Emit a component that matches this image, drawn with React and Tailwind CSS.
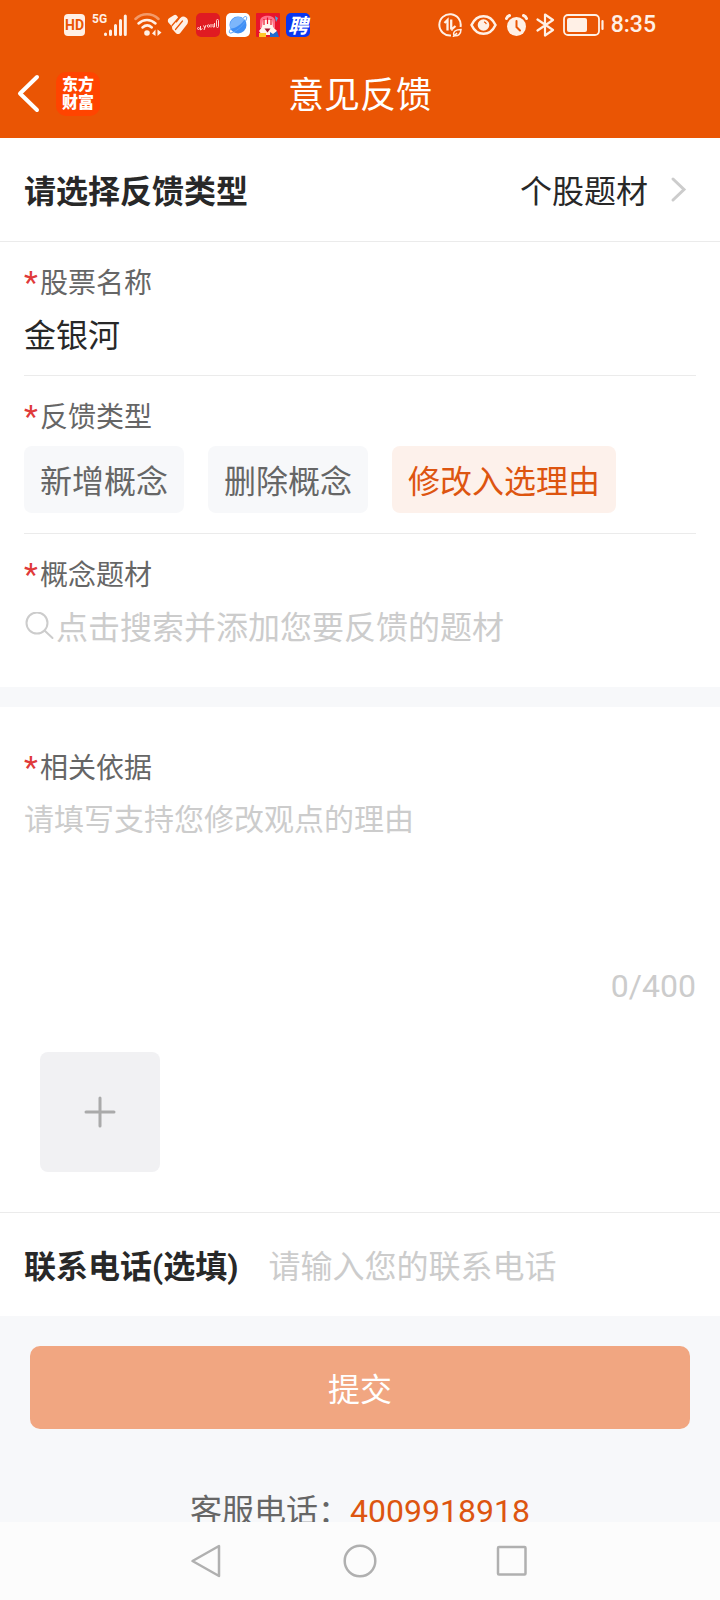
import React, { useState } from 'react';

const feedbackTypes = ['新增概念', '删除概念', '修改入选理由'];

const StatusBar = () => (
  <div className="flex h-[50px] items-center justify-between px-16 text-[#fff0e6]">
    <div className="flex items-center">
      <div className="flex h-[22px] w-[21px] items-center justify-center rounded bg-[#fff0e6] font-[Roboto] text-[14px] font-bold text-[#ea5504]">
        HD
      </div>
      <div className="-mr-1 ml-[7px] h-6 font-[Roboto] text-[12px] leading-3 font-bold">5G</div>
      <svg className="mr-[7px] h-6 w-6" viewBox="0 0 24 24" stroke="currentColor" strokeWidth="3" strokeLinecap="round">
        <path d="M2.500 21v.5M7.500 18v3.500M12.500 12.500v9M17.500 7.500v14M22.300 3v18.500" />
      </svg>
      <svg className="mr-[5px] h-6 w-7" viewBox="0 0 28 24" fill="none" stroke="currentColor" strokeWidth="2.500" strokeLinecap="round">
        <path d="M1.500 6C8-.3 18-.3 24.500 6" opacity=".45" />
        <path d="M4.500 10.500c5-4.800 12-4.800 17 0M8.500 14.500c3-2.600 6.500-2.600 9.300 0" />
        <circle cx="13" cy="20" r="2.800" fill="currentColor" stroke="none" />
        <path d="M18 20.500l3.500-4V23zM23.500 16.500V23l4-3.500z" fill="currentColor" stroke="none" />
      </svg>
      <svg className="mr-[7px] h-6 w-[22px]" viewBox="0 0 22 24" fill="none" stroke="currentColor" strokeLinecap="round" strokeLinejoin="round">
        <path d="M4 7.500L8 5M4 8l5 5.500" strokeWidth="6" />
        <path d="M9.500 13.500L15 6.500c1.500-1.500 4.500 0 3.500 3L11.500 18.500" strokeWidth="4.500" />
        <path d="M10.500 19L7 15" strokeWidth="4" />
        <path d="M15.500 8L8.500 16.500M11.500 5L5 12.500" stroke="#ea5504" strokeWidth="1.200" />
      </svg>
      <div className="flex gap-[6px]">
        <svg className="h-6 w-6" viewBox="0 0 24 24">
          <rect width="24" height="24" rx="5" fill="#e01b22" />
          <g fill="none" stroke="#ffd9d4" strokeWidth="1">
            <circle cx="2.500" cy="15.500" r="1" />
            <path d="M4.500 13v4l2-1.500M7.500 12.500l1.300 2.500L10 12M8.800 15L8 17" />
            <circle cx="12.500" cy="13" r="1.200" />
            <path d="M15 14.500v-3.500M17 11v3h1.500v-4" />
            <rect x="20.500" y="6.500" width="2" height="8" rx="1" />
          </g>
        </svg>
        <svg className="h-6 w-6" viewBox="0 0 24 24">
          <rect width="24" height="24" rx="5" fill="#fff" />
          <circle cx="12" cy="12" r="8.500" fill="#3f8ff5" />
          <path d="M4.500 15.500C9 16 16 11 18.500 6.500A8.500 8.500 0 0 0 4.500 15.500z" fill="#7db6fb" />
          <path d="M4.500 16c-1.500 2.500-1.500 3.700-.5 4 2 .5 8-3 12-7.300s5.500-8 4.300-9c-.7-.5-2 .1-3 1" fill="none" stroke="#5ba2f8" strokeWidth="1" />
        </svg>
        <svg className="h-6 w-6" viewBox="0 0 24 24">
          <rect width="24" height="24" rx="1" fill="#e8152b" />
          <path d="M4 15V8C4 1 19 1 19 8v7z" fill="#ff7088" />
          <path d="M3 18l3-4 1-7h9l1 7 4 4-3 4H6z" fill="#fff5ee" />
          <path d="M8 6v6M11.500 4.500V11M15 6v6" stroke="#e8152b" strokeWidth="1.200" />
          <path d="M8.500 15.500h6l-3 4z" fill="#a5142c" />
          <path d="M19 3l3 2-2 4z" fill="#44a8e8" />
          <path d="M3 20h7v4H3z" fill="#ffc928" />
          <path d="M14 19l3 2 4-3 2 6h-9z" fill="#1e6bd0" />
        </svg>
        <div className="flex h-6 w-6 items-center justify-center rounded-[5px] bg-[#0a36f0] font-['Noto_Sans_CJK_SC',sans-serif] text-[20px] leading-6 font-bold text-white italic">
          聘
        </div>
      </div>
    </div>
    <div className="flex items-center">
      <svg className="mr-2 h-6 w-6" viewBox="0 0 24 24" fill="none" stroke="currentColor" strokeWidth="2">
        <path d="M22.500 14A10.700 10.700 0 1 0 13 22.500" />
        <path d="M6.500 10L9.500 7v10.500M13.200 6.500v10M17.500 13l-4 3.500M13.200 16.500h1.500" strokeWidth="2.300" />
        <path d="M16 22.500c-1.500-4 2-6 7-6 0 4.500-3 7-7 6zM15 24l4-4" strokeWidth="1.500" />
      </svg>
      <svg className="mr-2 h-6 w-[27px]" viewBox="0 0 27 24" fill="none" stroke="currentColor" strokeWidth="2.500">
        <path d="M1.500 12C7 .3 20 .3 25.500 12 20 23.700 7 23.700 1.500 12z" />
        <circle cx="13.500" cy="12" r="5.800" fill="currentColor" stroke="none" />
        <path d="M14 8.800a3 3 0 0 1 2.300 2.300" stroke="#ea5504" strokeWidth="1.200" />
      </svg>
      <svg className="mr-2 h-6 w-[23px]" viewBox="0 0 23 24" fill="none">
        <circle cx="11.500" cy="13.500" r="9.500" fill="currentColor" />
        <path d="M1.500 5.500C2 4 3 3 4.500 2.500M18.500 2.500C20 3 21 4 21.500 5.500" stroke="currentColor" strokeWidth="3" strokeLinecap="round" />
        <path d="M11.500 8v6l3.500 3.500" stroke="#ea5504" strokeWidth="2" strokeLinecap="round" />
      </svg>
      <svg className="mr-2 h-6 w-[19px]" viewBox="0 0 19 24" fill="none" stroke="currentColor" strokeWidth="2.200" strokeLinejoin="round" strokeLinecap="round">
        <path d="M1.500 6.500L17 17l-8 5.500v-21L17 7 1.500 17.500" />
      </svg>
      <svg className="mr-[7px] h-6 w-[41px]" viewBox="0 0 41 24" fill="none">
        <rect x="1" y="2" width="35" height="20" rx="4" stroke="currentColor" strokeWidth="1.800" />
        <rect x="4" y="5" width="20" height="14" rx="2" fill="currentColor" />
        <path d="M39.500 8v8" stroke="currentColor" strokeWidth="2.200" strokeLinecap="round" />
      </svg>
      <span className="font-[Roboto] text-[23px] leading-6 font-medium">8:35</span>
    </div>
  </div>
);

const FieldLabel = ({ htmlFor, children }) => (
  <label htmlFor={htmlFor} className="flex h-10 items-center text-[28px] leading-10 text-[#666666]">
    <span className="w-4 self-start text-[32px] leading-9 text-[#e03a3a]">*</span>
    {children}
  </label>
);

const SystemNav = () => (
  <nav className="flex h-[78px] shrink-0 items-center justify-center gap-[116px] bg-[#fcfcfc] text-[#b0b0b0]">
    <button type="button" aria-label="返回">
      <svg className="h-9 w-9" viewBox="0 0 36 36" fill="none" stroke="currentColor" strokeWidth="2.500" strokeLinejoin="round">
        <path d="M29 3v30L2.500 18z" />
      </svg>
    </button>
    <button type="button" aria-label="主屏幕">
      <svg className="h-9 w-9" viewBox="0 0 36 36" fill="none" stroke="currentColor" strokeWidth="2.500">
        <circle cx="18" cy="18" r="15.300" />
      </svg>
    </button>
    <button type="button" aria-label="最近任务">
      <svg className="h-9 w-9" viewBox="0 0 36 36" fill="none" stroke="currentColor" strokeWidth="2.500" strokeLinejoin="round">
        <rect x="4" y="4" width="27.500" height="27.500" rx="1" />
      </svg>
    </button>
  </nav>
);

const App = () => {
  const [type, setType] = useState('修改入选理由');
  const [reason, setReason] = useState('');

  return (
    <div className="flex h-screen flex-col bg-[#f7f8fa] font-[Roboto,'Noto_Sans_CJK_SC',sans-serif] text-[#282828]">
      <header className="shrink-0 bg-[#ea5504] text-white">
        <StatusBar />
        <div className="grid h-[88px] grid-cols-[1fr_auto_1fr] items-center">
          <div className="flex items-center gap-4 pl-4">
            <button type="button" aria-label="返回">
              <svg className="h-10 w-6" viewBox="0 0 24 40" fill="none" stroke="currentColor" strokeWidth="4" strokeLinecap="round" strokeLinejoin="round">
                <path d="M21 3L4 19.500 21 36" />
              </svg>
            </button>
            <div className="flex h-11 w-11 flex-col items-center justify-center rounded-[10px] bg-[#ff4400] text-[16px] leading-[18px] font-black">
              <span>东方</span>
              <span>财富</span>
            </div>
          </div>
          <h1 className="pt-1 text-[36px] leading-[52px]">意见反馈</h1>
        </div>
      </header>

      <main className="min-h-0 flex-1 overflow-hidden">
        {/* Category */}
        <button type="button" className="flex h-[104px] w-full items-center justify-between border-b border-[#ebebeb] bg-white px-6 text-[32px]">
          <span className="pt-1 font-bold">请选择反馈类型</span>
          <span className="flex items-center">
            <span className="pt-1">个股题材</span>
            <svg className="ml-5 h-8 w-7" viewBox="0 0 28 32" fill="none" stroke="#cccccc" strokeWidth="3" strokeLinecap="round">
              <path d="M5 5l11 10.500L5 26" />
            </svg>
          </span>
        </button>

        <section className="bg-white px-6">
          <div className="border-b border-[#ebebeb] pt-[22px] pb-[15px]">
            <FieldLabel htmlFor="stock">股票名称</FieldLabel>
            <input
              id="stock"
              defaultValue="金银河"
              className="mt-2 block h-12 w-full text-[32px] outline-none"
            />
          </div>

          <div className="border-b border-[#ebebeb] pt-[22px] pb-5">
            <FieldLabel>反馈类型</FieldLabel>
            <div className="mt-2 flex gap-6">
              {feedbackTypes.map((item) => (
                <button
                  key={item}
                  type="button"
                  aria-pressed={type === item}
                  onClick={() => setType(item)}
                  className={`h-[67px] rounded-lg px-4 pt-1 text-[32px] ${
                    type === item ? 'bg-[#fdf1eb] text-[#dd5510]' : 'bg-[#f7f8fa] text-[#666666]'
                  }`}
                >
                  {item}
                </button>
              ))}
            </div>
          </div>

          <div className="pt-[22px] pb-[35px]">
            <FieldLabel htmlFor="concept">概念题材</FieldLabel>
            <div className="mt-2 flex h-12 items-center">
              <svg className="h-8 w-8 shrink-0" viewBox="0 0 32 32" fill="none" stroke="#cccccc" strokeWidth="2" strokeLinecap="round">
                <circle cx="13" cy="11" r="10.500" />
                <path d="M20.500 18.500l8 7.500" />
              </svg>
              <input
                id="concept"
                placeholder="点击搜索并添加您要反馈的题材"
                className="h-12 min-w-0 flex-1 text-[32px] outline-none placeholder:text-[#cccccc]"
              />
            </div>
          </div>
        </section>

        {/* Reason */}
        <section className="mt-5 border-b border-[#ebebeb] bg-white px-6 pt-[42px] pb-10">
          <FieldLabel htmlFor="reason">相关依据</FieldLabel>
          <textarea
            id="reason"
            maxLength={400}
            value={reason}
            onChange={(e) => setReason(e.target.value)}
            placeholder="请填写支持您修改观点的理由"
            className="mt-[7px] block h-[166px] w-full resize-none text-[30px] leading-[48px] outline-none placeholder:text-[#cccccc]"
          />
          <div className="text-right text-[32px] leading-[48px] text-[#cccccc]">{reason.length}/400</div>
          <button type="button" aria-label="添加图片" className="mt-[42px] ml-4 flex h-[120px] w-[120px] items-center justify-center rounded-lg bg-[#f1f1f3]">
            <svg className="h-8 w-8" viewBox="0 0 32 32" stroke="#aaaaaa" strokeWidth="3" strokeLinecap="round">
              <path d="M16 2v28M2 16h28" />
            </svg>
          </button>
        </section>

        <section className="flex h-[103px] items-center bg-white px-6 pt-1 text-[32px]">
          <label htmlFor="phone" className="shrink-0 font-bold">联系电话(选填)</label>
          <input
            id="phone"
            type="tel"
            placeholder="请输入您的联系电话"
            className="ml-[30px] h-12 min-w-0 flex-1 outline-none placeholder:text-[#cccccc]"
          />
        </section>

        <div className="px-[30px] pt-[30px]">
          <button type="submit" className="h-[83px] w-full rounded-[10px] bg-[#f1a681] pt-1 text-[32px] text-white">
            提交
          </button>
        </div>
        <p className="mt-[58px] text-center text-[32px] leading-[48px] text-[#666666]">
          客服电话：<a href="tel:4009918918" className="text-[#dd5510]">4009918918</a>
        </p>
      </main>

      <SystemNav />
    </div>
  );
};

export default App;
